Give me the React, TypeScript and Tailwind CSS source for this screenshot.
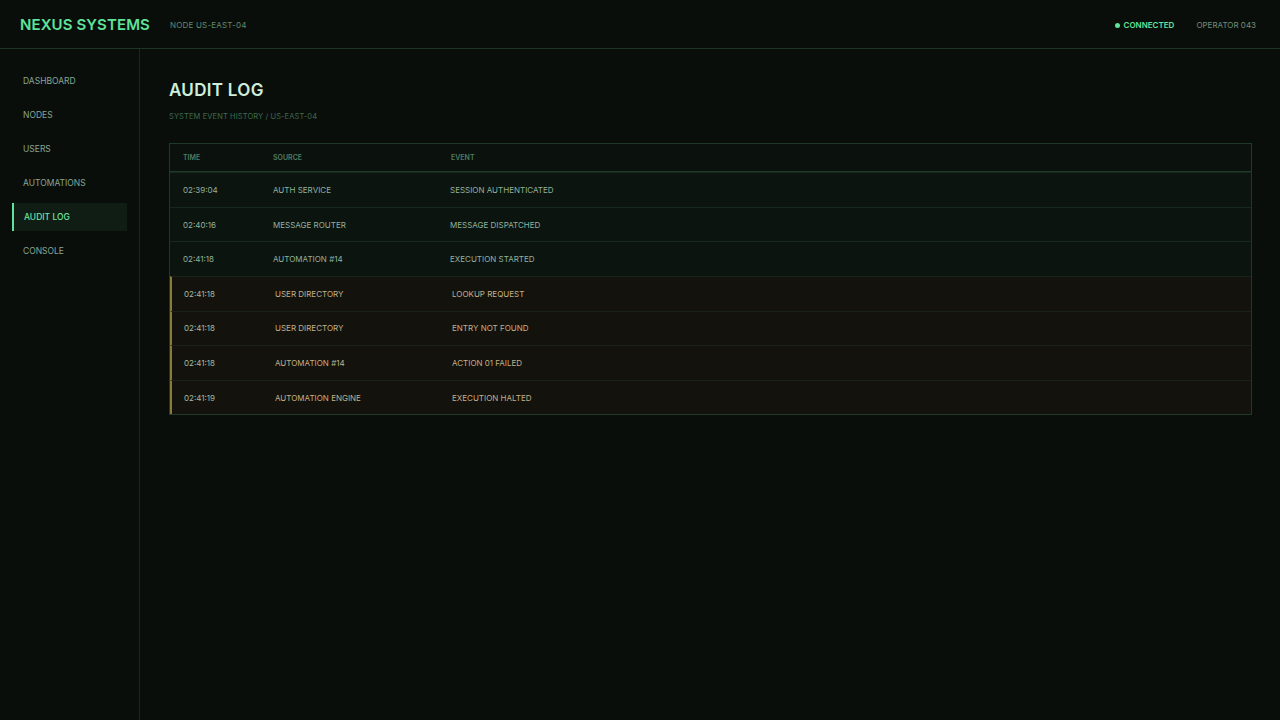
import React from "react";

const nav = ["DASHBOARD", "NODES", "USERS", "AUTOMATIONS", "AUDIT LOG", "CONSOLE"];

const rows: { t: string; s: string; e: string; warn?: boolean }[] = [
  { t: "02:39:04", s: "AUTH SERVICE", e: "SESSION AUTHENTICATED" },
  { t: "02:40:16", s: "MESSAGE ROUTER", e: "MESSAGE DISPATCHED" },
  { t: "02:41:18", s: "AUTOMATION #14", e: "EXECUTION STARTED" },
  { t: "02:41:18", s: "USER DIRECTORY", e: "LOOKUP REQUEST", warn: true },
  { t: "02:41:18", s: "USER DIRECTORY", e: "ENTRY NOT FOUND", warn: true },
  { t: "02:41:18", s: "AUTOMATION #14", e: "ACTION 01 FAILED", warn: true },
  { t: "02:41:19", s: "AUTOMATION ENGINE", e: "EXECUTION HALTED", warn: true },
];

export default function App() {
  return (
    <div
      className="w-[1280px] h-[720px] bg-[#0a0e0b] flex flex-col overflow-hidden"
      style={{ fontFamily: "Inter, 'Liberation Sans', sans-serif" }}
    >
      <header className="h-[49px] shrink-0 border-b border-[#1d3524] flex items-center pl-[20px] pr-[24px] pt-[2px]">
        <div className="text-[15px] font-semibold text-[#5fe39a] tracking-[0.1px]">NEXUS SYSTEMS</div>
        <div className="ml-[20px] text-[8px] text-[#5f8a70] tracking-[0.2px]">NODE US-EAST-04</div>
        <div className="ml-auto flex items-center gap-[22px] text-[8px]">
          <div className="flex items-center gap-[4px] text-[#5fe39a] font-semibold">
            <span className="w-[5px] h-[5px] rounded-full bg-[#5fe39a]" />
            CONNECTED
          </div>
          <div className="text-[#6f8f7c]">OPERATOR 043</div>
        </div>
      </header>
      <div className="flex flex-1 min-h-0">
        <aside className="w-[140px] shrink-0 border-r border-[#17291d] pt-[18px] px-[12px] flex flex-col gap-[6px]">
          {nav.map((n) => {
            const active = n === "AUDIT LOG";
            return (
              <div
                key={n}
                className={
                  active
                    ? "h-[28px] flex items-center pl-[10px] text-[8.5px] font-medium text-[#6fe3a0] bg-[#0f1d14] border-l-2 border-[#5fe39a]"
                    : "h-[28px] flex items-center pl-[11px] text-[8.5px] text-[#86a693]"
                }
              >
                {n}
              </div>
            );
          })}
        </aside>
        <main className="flex-1 pl-[29px] pr-[28px] pt-[30px]">
          <h1 className="text-[17px] font-semibold text-[#cdeedb] leading-[22px] tracking-[0.3px]">AUDIT LOG</h1>
          <div className="mt-[10px] text-[7.5px] text-[#3d6a4e] tracking-[0.1px]">SYSTEM EVENT HISTORY / US-EAST-04</div>
          <div className="mt-[21px] border border-[#1f3a28] bg-[#0b110d]">
            <div className="h-[28px] flex items-center px-[13px] text-[7px] font-semibold text-[#4f7c62] border-b border-[#1f3a28]">
              <div className="w-[90px]">TIME</div>
              <div className="w-[178px]">SOURCE</div>
              <div>EVENT</div>
            </div>
            {rows.map((r, i) => (
              <div
                key={i}
                className={
                  r.warn
                    ? "h-[34.6px] flex items-center pl-[12px] pr-[13px] text-[8px] text-[#c2b08a] bg-[#13120c] border-l-2 border-[#8a7a3c] border-t border-t-[#1a2218]"
                    : "h-[34.6px] flex items-center px-[13px] text-[8px] text-[#93b19e] bg-[#0c140f] border-t border-t-[#17291d] first:border-t-0"
                }
              >
                <div className={r.warn ? "w-[91px] text-[#a3bca3]" : "w-[90px]"}>{r.t}</div>
                <div className="w-[177px]">{r.s}</div>
                <div>{r.e}</div>
              </div>
            ))}
          </div>
        </main>
      </div>
    </div>
  );
}
